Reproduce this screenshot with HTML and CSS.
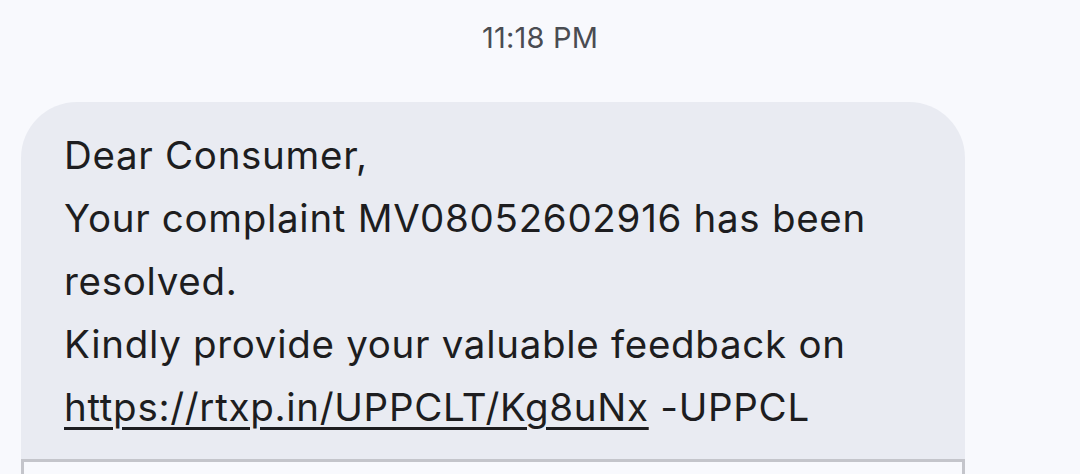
FILE: index.html
```html
<!DOCTYPE html>
<html lang="en">
<head>
<meta charset="utf-8">
<title>Message</title>
<link rel="stylesheet" href="styles.css">
</head>
<body>
<div class="thread">
  <div class="timestamp">11:18 PM</div>
  <div class="bubble">
    <div class="message">
      <div>Dear Consumer,</div>
      <div>Your complaint MV08052602916 has been resolved.</div>
      <div>Kindly provide your valuable feedback on <a class="link" href="#">https://rtxp.in/UPPCLT/Kg8uNx</a> -UPPCL</div>
    </div>
    <div class="preview"></div>
  </div>
</div>
</body>
</html>
```

FILE: styles.css
```css
html, body {
  margin: 0;
  padding: 0;
  height: 100%;
  overflow: hidden;
  background: #f8f9fd;
}
.thread {
  display: flex;
  flex-direction: column;
  font-family: Inter, Roboto, "Noto Sans", sans-serif;
}
.timestamp {
  text-align: center;
  color: #4a4c52;
  font-size: 29px;
  line-height: 36px;
  padding-top: 20px;
  height: 102px;
  box-sizing: border-box;
  letter-spacing: 0.2px;
}
.bubble {
  margin-left: 21px;
  width: 944px;
  background: #e9ebf2;
  border-radius: 56px 56px 0 0;
  display: flex;
  flex-direction: column;
}
.message {
  padding: 22px 60px 20px 43px;
  font-size: 38.5px;
  letter-spacing: 0.7px;
  line-height: 63px;
  color: #1d1d20;
}
.link {
  color: #1d1d20;
  text-decoration: underline;
  text-decoration-thickness: 3px;
  text-underline-offset: 6px;
}
.preview {
  height: 200px;
  border: 3px solid #c4c5cb;
  background: #f8f9fd;
}
```
